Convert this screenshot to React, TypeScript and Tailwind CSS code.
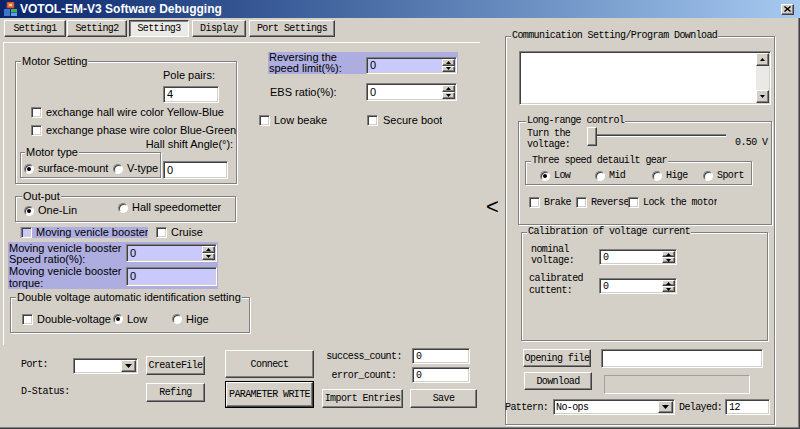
import React from "react";

const raised =
  "bg-[#d4d0c8] border border-t-white border-l-white border-r-[#404040] border-b-[#404040] shadow-[inset_-1px_-1px_0_#808080]";
const pressed =
  "bg-[#eceae6] border border-t-[#404040] border-l-[#404040] border-r-white border-b-white shadow-[inset_1px_1px_0_#808080]";
const sunken =
  "border border-t-[#808080] border-l-[#808080] border-r-white border-b-white shadow-[inset_1px_1px_0_#404040,inset_-1px_-1px_0_#d4d0c8]";
const sans = "font-['Liberation_Sans',Arial,sans-serif] text-[11px] text-black";
const mono = "font-['Liberation_Mono','Courier_New',monospace] text-[10px] tracking-[-0.6px] text-black";
const lav = "bg-[#adaddf]";
const lavInput = "bg-[#c9c9fb]";

type Kids = { children?: React.ReactNode };

function GroupBox({
  title,
  className = "",
  legend = "",
  children,
}: { title: string; className?: string; legend?: string } & Kids) {
  return (
    <fieldset className={`border border-[#808080] shadow-[1px_1px_0_#fff,inset_1px_1px_0_#fff] ${className}`}>
      <legend className={`px-[1px] leading-[12px] whitespace-nowrap bg-[#d4d0c8] ${legend}`}>{title}</legend>
      {children}
    </fieldset>
  );
}

function Check({ label, className = "", box = "bg-white", gap = "ml-[4px]" }: { label: string; className?: string; box?: string; gap?: string }) {
  return (
    <div className={`flex items-center whitespace-nowrap overflow-hidden ${className}`}>
      <span className={`w-[11px] h-[11px] shrink-0 ${box} ${sunken}`} />
      <span className={gap}>{label}</span>
    </div>
  );
}

function Radio({ label, checked = false, className = "", gap = "ml-[4px]" }: { label: string; checked?: boolean; className?: string; gap?: string }) {
  return (
    <div className={`flex items-center h-[11px] whitespace-nowrap ${className}`}>
      <span className="w-[10px] h-[10px] shrink-0 rounded-full bg-white border border-t-[#808080] border-l-[#808080] border-r-white border-b-white shadow-[inset_1px_1px_0_#404040] flex items-center justify-center">
        {checked && <span className="w-[4px] h-[4px] rounded-full bg-black" />}
      </span>
      <span className={gap}>{label}</span>
    </div>
  );
}

function Arrow({ up }: { up?: boolean }) {
  return (
    <svg width="5" height="3" viewBox="0 0 5 3">
      <path d={up ? "M2.5 0L5 3H0z" : "M0 0h5L2.5 3z"} fill="#000" />
    </svg>
  );
}

function Spin() {
  return (
    <div className="ml-auto mr-[1px] self-stretch my-[1px] flex flex-col w-[13px] shrink-0">
      <div className={`flex-1 flex items-center justify-center ${raised}`}>
        <Arrow up />
      </div>
      <div className={`flex-1 flex items-center justify-center ${raised}`}>
        <Arrow />
      </div>
    </div>
  );
}

function Edit({ value = "", className = "", bg = "bg-white", spin = false }: { value?: string; className?: string; bg?: string; spin?: boolean }) {
  return (
    <div className={`flex items-center shrink-0 ${sunken} ${bg} ${className}`}>
      <span className="pl-[3px] flex-1 whitespace-nowrap">{value}</span>
      {spin && <Spin />}
    </div>
  );
}

function Btn({ label, className = "" }: { label: string; className?: string }) {
  return (
    <div className={`flex items-center justify-center whitespace-nowrap overflow-hidden shrink-0 ${raised} ${mono} ${className}`}>
      {label}
    </div>
  );
}

function Combo({ value = "", className = "" }: { value?: string; className?: string }) {
  return (
    <div className={`flex items-center bg-white shrink-0 ${sunken} ${className}`}>
      <span className={`flex-1 pl-[2px] ${mono}`}>{value}</span>
      <div className={`w-[15px] self-stretch my-[1px] mr-[1px] flex items-center justify-center ${raised}`}>
        <svg width="7" height="4" viewBox="0 0 7 4">
          <path d="M0 0h7L3.5 4z" fill="#000" />
        </svg>
      </div>
    </div>
  );
}

function AppIcon() {
  return (
    <svg width="13" height="14" viewBox="0 0 13 14" className="ml-[4px] shrink-0">
      <rect x="3" y="0" width="7" height="6" fill="#e8704a" stroke="#a33" strokeWidth="0.8" />
      <rect x="5" y="2" width="3" height="2" fill="#f6d27a" />
      <rect x="0" y="7" width="6" height="7" fill="#3a78c9" />
      <rect x="7" y="7" width="6" height="3" fill="#3fb34f" />
      <rect x="7" y="10.5" width="6" height="3.5" fill="#5aa0e6" />
    </svg>
  );
}

const tabs = [
  { t: "Setting1", c: "w-[62px]" },
  { t: "Setting2", c: "ml-[1px] w-[60px]" },
  { t: "Setting3", c: "ml-[2px] w-[60px]", on: true },
  { t: "Display", c: "ml-[3px] w-[54px]" },
  { t: "Port Settings", c: "ml-[3px] w-[86px]" },
];

function LeftPane() {
  return (
    <div className="w-[254px] shrink-0 flex flex-col items-start">
      <GroupBox title="Motor Setting" className="mt-[12px] ml-[11px] w-[221px] pb-[4px]" legend="ml-[5px]">
        <div className="ml-[147px] flex flex-col items-start">
          <span className="mt-[2px] leading-[13px]">Pole pairs:</span>
          <Edit value="4" className="mt-[4px] w-[56px] h-[17px]" />
        </div>
        <Check label="exchange hall wire color Yellow-Blue" className="ml-[15px] mt-[3px] h-[13px]" />
        <Check label="exchange phase wire color Blue-Green" className="ml-[15px] mt-[5px] h-[13px]" />
        <div className="text-right pr-[3px] mt-[2px] leading-[11px]">Hall shift Angle(°):</div>
        <div className="flex items-start -mt-[4px]">
          <GroupBox title="Motor type" className="ml-[4px] w-[141px] pb-[3px]" legend="ml-[4px]">
            <div className="flex mt-[5px]">
              <Radio label="surface-mount" checked className="ml-[3px] w-[89px]" />
              <Radio label="V-type" />
            </div>
          </GroupBox>
          <Edit value="0" className="ml-[2px] mt-[15px] w-[65px] h-[18px]" />
        </div>
      </GroupBox>

      <GroupBox title="Out-put" className="mt-[6px] ml-[11px] w-[221px] pb-[5px]" legend="ml-[6px]">
        <div className="flex items-start">
          <Radio label="One-Lin" checked className="ml-[8px] mt-[3px] w-[94px]" />
          <Radio label="Hall speedometter" />
        </div>
      </GroupBox>

      <div className="mt-[5px] ml-[16px] h-[11px] flex items-center leading-[11px]">
        <div className={`flex items-center h-[11px] w-[128px] ${lav}`}>
          <Check label="Moving venicle booster" box={lavInput} className="ml-[1px] h-[11px]" />
        </div>
        <Check label="Cruise" className="ml-[8px] h-[11px]" />
      </div>

      <div className={`mt-[4px] ml-[4px] w-[210px] h-[47px] flex flex-col ${lav}`}>
        <div className="flex items-start h-[23px]">
          <div className="w-[118px] pl-[1px] leading-[11px] pt-[1px] whitespace-nowrap">
            Moving venicle booster
            <br />
            Speed ratio(%):
          </div>
          <Edit value="0" spin bg={lavInput} className="mt-[2px] w-[91px] h-[18px]" />
        </div>
        <div className="flex items-start h-[24px]">
          <div className="w-[118px] pl-[1px] leading-[12px] whitespace-nowrap">
            Moving venicle booster
            <br />
            torque:
          </div>
          <Edit value="0" bg={lavInput} className="mt-[2px] w-[91px] h-[19px]" />
        </div>
      </div>

      <GroupBox
        title="Double voltage automatic identification setting"
        className="mt-[2px] ml-[6px] w-[240px] pb-[4px]"
        legend="ml-[5px]"
      >
        <div className="flex mt-[8px] items-center">
          <Check label="Double-voltage" className="ml-[11px] w-[91px]" />
          <Radio label="Low" checked className="w-[59px]" />
          <Radio label="Hige" />
        </div>
      </GroupBox>
    </div>
  );
}

function MidPane() {
  return (
    <div className="flex flex-col items-start">
      <div className={`mt-[9px] ml-[10px] w-[190px] h-[22px] flex items-start ${lav}`}>
        <div className="w-[98px] pl-[1px] leading-[11px] whitespace-nowrap">
          Reversing the
          <br />
          speed limit(%):
        </div>
        <Edit value="0" spin bg={lavInput} className="mt-[5px] w-[91px] h-[17px]" />
      </div>
      <div className="mt-[9px] ml-[10px] flex items-center">
        <span className="w-[98px] pl-[2px]">EBS ratio(%):</span>
        <Edit value="0" spin className="w-[91px] h-[18px]" />
      </div>
      <div className="mt-[11px] ml-[1px] flex items-center">
        <Check label="Low beake" className="w-[108px]" />
        <Check label="Secure boot" gap="ml-[5px]" />
      </div>
    </div>
  );
}

function BottomBar() {
  return (
    <div className={`flex items-start ${mono}`}>
      <div className="ml-[21px] w-[52px] flex flex-col">
        <span className="mt-[14px] leading-[12px]">Port:</span>
        <span className="mt-[15px] leading-[12px]">D-Status:</span>
      </div>
      <Combo className="mt-[13px] w-[65px] h-[16px]" />
      <div className="ml-[8px] w-[59px] flex flex-col">
        <Btn label="CreateFile" className="mt-[11px] h-[19px]" />
        <Btn label="Refing" className="mt-[8px] h-[19px]" />
      </div>
      <div className="ml-[20px] w-[89px] flex flex-col">
        <Btn label="Connect" className="mt-[5px] h-[28px]" />
        <div className="mt-[3px] h-[27px] border border-black flex">
          <Btn label="PARAMETER WRITE" className="flex-1" />
        </div>
      </div>
      <div className="ml-[8px] w-[155px] flex flex-col">
        <div className="mt-[3px] flex items-center">
          <span className="w-[84px] text-center">success_count:</span>
          <Edit value="0" className="ml-[6px] w-[58px] h-[16px]" />
        </div>
        <div className="mt-[3px] flex items-center">
          <span className="w-[84px] text-center">error_count:</span>
          <Edit value="0" className="ml-[6px] w-[58px] h-[16px]" />
        </div>
        <div className="mt-[6px] flex">
          <Btn label="Import Entries" className="w-[81px] h-[19px]" />
          <Btn label="Save" className="ml-[7px] w-[67px] h-[19px]" />
        </div>
      </div>
    </div>
  );
}

function RightPane() {
  return (
    <div className={`flex-1 pt-[12px] ${mono}`}>
      <GroupBox title="Communication Setting/Program Download" className="w-[270px] pb-[9px]" legend="ml-[5px]">
        <div className={`ml-[13px] mt-[9px] w-[252px] h-[54px] bg-white flex justify-end ${sunken}`}>
          <div className="w-[13px] my-[1px] mr-[1px] flex flex-col">
            <div className={`h-[13px] flex items-center justify-center ${raised}`}>
              <Arrow up />
            </div>
            <div className="flex-1 bg-[#ebe9e5]" />
            <div className={`h-[13px] flex items-center justify-center ${raised}`}>
              <Arrow />
            </div>
          </div>
        </div>

        <GroupBox title="Long-range control" className="ml-[12px] mt-[10px] w-[254px] pb-[14px]" legend="ml-[7px]">
          <div className="flex items-start">
            <div className="ml-[8px] mt-[1px] w-[60px] leading-[11px]">
              Turn the
              <br />
              voltage:
            </div>
            <div className="relative w-[139px] h-[19px]">
              <div className="mt-[7px] h-[3px] border-t border-t-[#808080] border-b border-b-white bg-[#404040]" />
              <div className={`absolute left-0 top-0 w-[10px] h-[19px] ${raised}`} />
            </div>
            <span className="ml-[9px] mt-[10px] leading-[12px]">0.50 V</span>
          </div>
          <GroupBox title="Three speed detauilt gear" className="ml-[6px] mt-[5px] w-[227px] pb-[3px]" legend="ml-[5px]">
            <div className="flex mt-[3px]">
              <Radio label="Low" checked className="ml-[14px] w-[55px]" />
              <Radio label="Mid" className="w-[57px]" />
              <Radio label="Hige" className="w-[51px]" />
              <Radio label="Sport" />
            </div>
          </GroupBox>
          <div className="flex mt-[10px]">
            <Check label="Brake" className="ml-[10px] w-[47px]" />
            <Check label="Reverse" className="w-[52px]" />
            <Check label="Lock the motor" className="w-[89px]" />
          </div>
        </GroupBox>

        <GroupBox title="Calibration of voltage current" className="ml-[15px] mt-[1px] w-[247px] pb-[43px]" legend="ml-[5px]">
          <div className="flex items-start mt-[6px]">
            <div className="ml-[9px] w-[68px] leading-[11px]">
              nominal
              <br />
              voltage:
            </div>
            <Edit value="0" spin className="mt-[5px] w-[78px] h-[16px]" />
          </div>
          <div className="flex items-start mt-[7px]">
            <div className="ml-[7px] w-[70px] leading-[12px]">
              calibrated
              <br />
              cuttent:
            </div>
            <Edit value="0" spin className="mt-[5px] w-[78px] h-[16px]" />
          </div>
        </GroupBox>

        <div className="flex mt-[8px]">
          <Btn label="Opening file" className="ml-[17px] w-[68px] h-[18px]" />
          <Edit className="ml-[10px] w-[162px] h-[19px]" />
        </div>
        <div className="flex items-start mt-[4px]">
          <Btn label="Download" className="ml-[18px] w-[68px] h-[18px]" />
          <div className="ml-[12px] mt-[3px] w-[146px] h-[19px] border border-[#a0a0a0] border-b-white border-r-white bg-[#d4d0c8]" />
        </div>
        <div className="flex items-center mt-[5px] -ml-[1px]">
          <span className="w-[48px]">Pattern:</span>
          <Combo value="No-ops" className="w-[122px] h-[16px]" />
          <span className="ml-[4px] w-[46px]">Delayed:</span>
          <Edit value="12" className="w-[45px] h-[16px]" />
        </div>
      </GroupBox>
    </div>
  );
}

export default function App() {
  return (
    <div
      className={`w-[800px] h-[429px] bg-[#d4d0c8] flex flex-col overflow-hidden shadow-[inset_-1px_-1px_0_#404040,inset_-2px_-2px_0_#808080] ${sans}`}
    >
      <div className="h-[18px] shrink-0 flex items-center bg-linear-to-r from-[#0a246a] to-[#a6caf0]">
        <AppIcon />
        <span className="ml-[3px] text-white font-bold text-[12px]">VOTOL-EM-V3 Software Debugging</span>
        <div className={`ml-auto mr-[6px] w-[13px] h-[11px] flex items-center justify-center ${raised}`}>
          <svg width="7" height="6" viewBox="0 0 7 6">
            <path d="M0.5 0.5l6 5M6.5 0.5l-6 5" stroke="#000" strokeWidth="1.4" />
          </svg>
        </div>
      </div>

      <div className="flex flex-1">
        <div className="w-[480px] shrink-0 flex flex-col">
          <div className="flex pt-[2px] pl-[4px]">
            {tabs.map((tab) => (
              <div
                key={tab.t}
                className={`h-[17px] flex items-center justify-center ${mono} ${tab.on ? pressed : raised} ${tab.c}`}
              >
                {tab.t}
              </div>
            ))}
          </div>
          <div className="mt-[5px] ml-[3px] w-[477px] h-[303px] border-t border-l border-white flex">
            <LeftPane />
            <MidPane />
          </div>
          <BottomBar />
        </div>

        <div className="w-[25px] shrink-0 flex justify-center pt-[178px] text-[22px] leading-none">&lt;</div>

        <RightPane />
      </div>
    </div>
  );
}
